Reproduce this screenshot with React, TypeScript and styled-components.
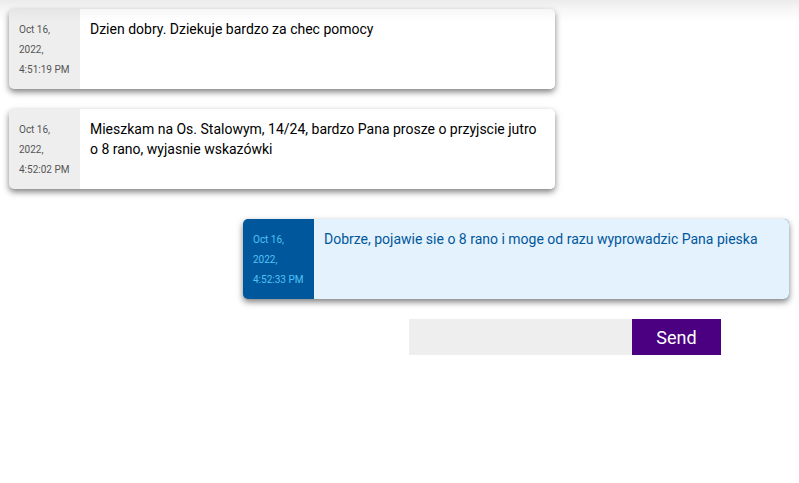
import React from "react";
import styled, { createGlobalStyle } from "styled-components";

const GlobalStyle = createGlobalStyle`
  * { box-sizing: border-box; }
  body { margin: 0; background: #fff; font-family: Roboto, "Liberation Sans", sans-serif; }
`;

const Page = styled.main`
  position: relative;
  min-height: 100vh;
  padding: 9px 10px 0 9px;

  &::before {
    content: "";
    position: absolute;
    inset: 0 0 auto;
    height: 22px;
    background: linear-gradient(rgba(0, 0, 0, 0.08), rgba(0, 0, 0, 0.03) 10px, transparent);
    pointer-events: none;
    z-index: 1;
  }
`;

const Thread = styled.ol`
  list-style: none;
  margin: 0;
  padding: 0;
  display: flex;
  flex-direction: column;
  gap: 20px;
`;

const Message = styled.li<{ $own?: boolean }>`
  display: flex;
  width: 70%;
  min-height: 80px;
  align-self: ${(p) => (p.$own ? "flex-end" : "flex-start")};
  margin-top: ${(p) => (p.$own ? "10px" : "0")};
  border-radius: 5px;
  overflow: hidden;
  line-height: 20px;
  color: ${(p) => (p.$own ? "#01579b" : "#000")};
  background: ${(p) => (p.$own ? "#01579b" : "#eee")};
  box-shadow: 0 3px 6px rgba(0, 0, 0, 0.5);
`;

const Stamp = styled.time<{ $own?: boolean }>`
  flex: 0 0 13%;
  padding: 11px 10px 9px;
  font-size: 10px;
  color: ${(p) => (p.$own ? "#4fc3f7" : "#555")};
`;

const Text = styled.p<{ $own?: boolean }>`
  flex: 1;
  margin: 0;
  padding: 10px;
  font-size: 14px;
  background: ${(p) => (p.$own ? "#e3f2fd" : "#fff")};
`;

const Composer = styled.form`
  display: flex;
  width: 40%;
  margin: 20px 0 0 400px;
`;

const Field = styled.input`
  flex: 1;
  min-width: 0;
  height: 36px;
  padding: 0 10px;
  border: 0;
  background: #eee;
  font: 18px Roboto, sans-serif;
`;

const SendButton = styled.button`
  min-width: 89px;
  height: 36px;
  padding: 0 24px;
  border: 0;
  color: #fff;
  background: #4b0082;
  font: 18px Roboto, sans-serif;
`;

const messages = [
  { date: "Oct 16, 2022, 4:51:19 PM", text: "Dzien dobry. Dziekuje bardzo za chec pomocy", own: false },
  { date: "Oct 16, 2022, 4:52:02 PM", text: "Mieszkam na Os. Stalowym, 14/24, bardzo Pana prosze o przyjscie jutro o 8 rano, wyjasnie wskazówki", own: false },
  { date: "Oct 16, 2022, 4:52:33 PM", text: "Dobrze, pojawie sie o 8 rano i moge od razu wyprowadzic Pana pieska", own: true },
];

export default function App() {
  return (
    <Page>
      <GlobalStyle />
      <Thread>
        {messages.map((m) => (
          <Message key={m.date} $own={m.own}>
            <Stamp $own={m.own}>{m.date}</Stamp>
            <Text $own={m.own}>{m.text}</Text>
          </Message>
        ))}
      </Thread>
      <Composer onSubmit={(e) => e.preventDefault()}>
        <Field type="text" aria-label="Message" />
        <SendButton type="submit">Send</SendButton>
      </Composer>
    </Page>
  );
}
